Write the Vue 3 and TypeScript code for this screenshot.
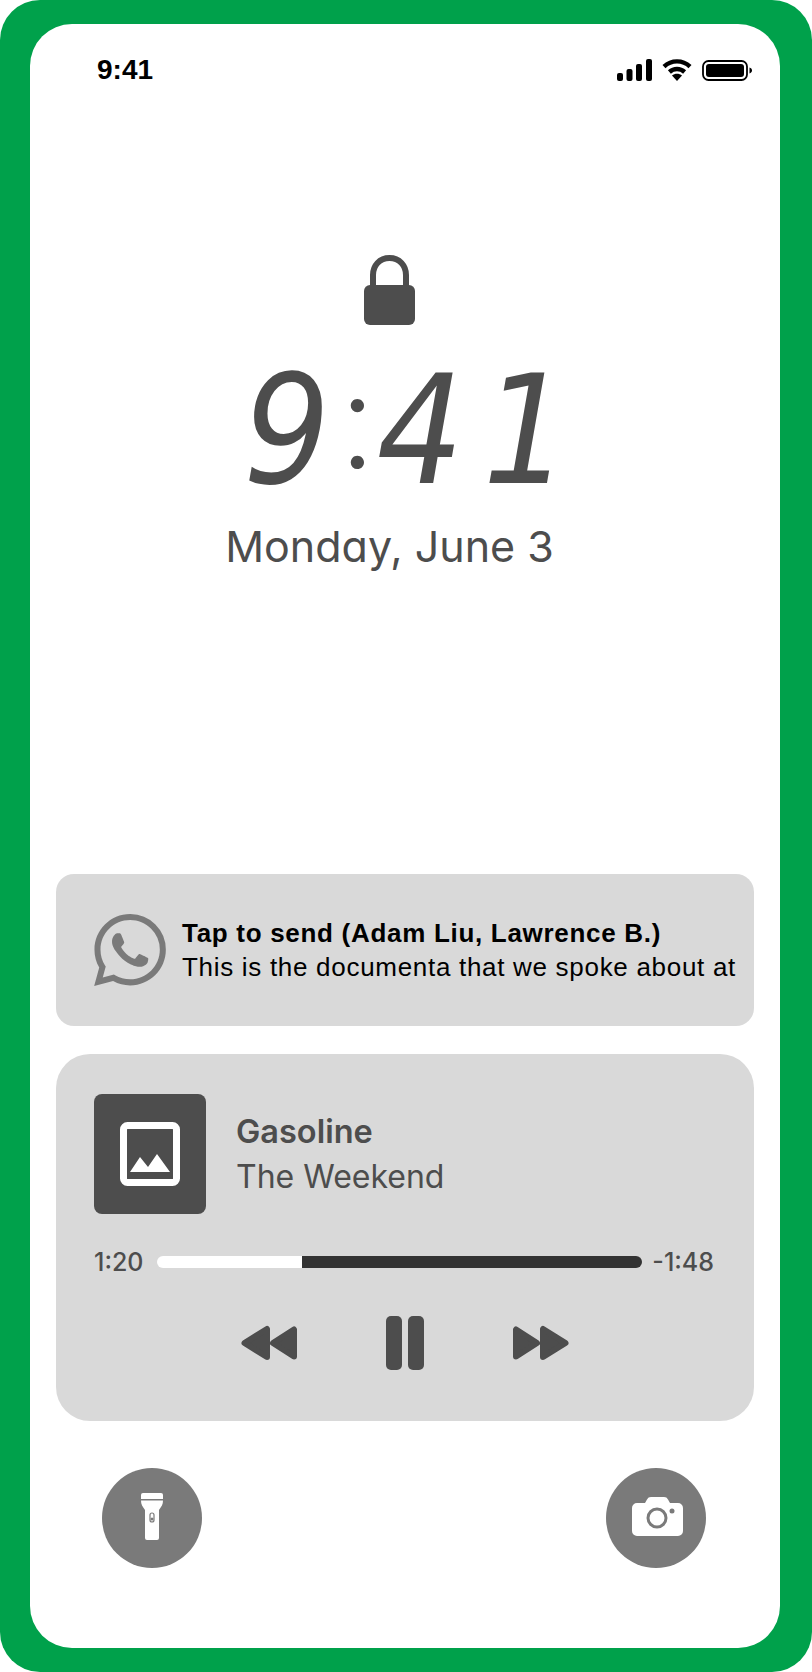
<template>
  <div class="frame">
    <div class="phone">
      <header class="status-bar">
        <span class="status-time">9:41</span>
        <div class="status-icons">
          <svg width="35" height="22" viewBox="0 0 35 22" fill="#000">
            <rect x="0" y="14" width="6" height="8" rx="2" />
            <rect x="9.5" y="10" width="6" height="12" rx="2" />
            <rect x="19" y="5" width="6" height="17" rx="2" />
            <rect x="29" y="0" width="6" height="22" rx="2" />
          </svg>
          <svg width="30" height="23" viewBox="0 0 30 23" fill="none" stroke="#000" stroke-width="4.4">
            <path d="M2 8.6C9.4 1.6 20.6 1.6 28 8.6" />
            <path d="M7.4 14C11.8 10 18.2 10 22.6 14" />
            <path d="M15 23l-5-5.4c2.8-2.4 7.2-2.4 10 0z" fill="#000" stroke="none" />
          </svg>
          <svg width="50" height="21" viewBox="0 0 50 21">
            <rect x="1" y="1" width="44" height="19" rx="5.5" fill="none" stroke="#000" stroke-width="1.8" />
            <rect x="4" y="4" width="38" height="13" rx="3" fill="#000" />
            <path d="M47.5 7.5c1.5.4 2.5 1.6 2.5 3s-1 2.6-2.5 3z" fill="#000" />
          </svg>
        </div>
      </header>

      <section class="hero">
        <svg class="lock" width="51" height="70" viewBox="0 0 51 70">
          <path d="M9 34V20C9 10.500 15.500 3 25.500 3S42 10.500 42 20v14" fill="none" stroke="#4d4d4d" stroke-width="6" />
          <rect x="0" y="30" width="51" height="40" rx="6" fill="#4d4d4d" />
        </svg>
        <div class="clock"><span>9</span><span class="colon">:</span><span>4</span><span class="last">1</span></div>
        <div class="date">Monday, June 3</div>
      </section>

      <section class="cards">
        <div class="notification">
          <svg class="wa" width="72" height="72" viewBox="0 0 24 24" fill="#7a7a7a">
            <path d="M17.472 14.382c-.297-.149-1.758-.867-2.03-.967-.273-.099-.471-.148-.67.15-.197.297-.767.966-.94 1.164-.173.199-.347.223-.644.075-.297-.15-1.255-.463-2.39-1.475-.883-.788-1.48-1.761-1.653-2.059-.173-.297-.018-.458.13-.606.134-.133.298-.347.446-.52.149-.174.198-.298.298-.497.099-.198.05-.371-.025-.52-.075-.149-.669-1.612-.916-2.207-.242-.579-.487-.5-.669-.51-.173-.008-.371-.01-.57-.01-.198 0-.52.074-.792.372-.272.297-1.04 1.016-1.04 2.479 0 1.462 1.065 2.875 1.213 3.074.149.198 2.096 3.2 5.077 4.487.709.306 1.262.489 1.694.625.712.227 1.36.195 1.871.118.571-.085 1.758-.719 2.006-1.413.248-.694.248-1.289.173-1.413-.074-.124-.272-.198-.57-.347m-5.421 7.403h-.004a9.87 9.87 0 01-5.031-1.378l-.361-.214-3.741.982.998-3.648-.235-.374a9.86 9.86 0 01-1.51-5.26c.001-5.45 4.436-9.884 9.888-9.884 2.64 0 5.122 1.03 6.988 2.898a9.825 9.825 0 012.893 6.994c-.003 5.45-4.437 9.884-9.885 9.884m8.413-18.297A11.815 11.815 0 0012.05 0C5.495 0 .16 5.335.157 11.892c0 2.096.547 4.142 1.588 5.945L.057 24l6.305-1.654a11.882 11.882 0 005.683 1.448h.005c6.554 0 11.89-5.335 11.893-11.893a11.821 11.821 0 00-3.48-8.413z" />
          </svg>
          <div class="note-text">
            <div class="note-title">Tap to send (Adam Liu, Lawrence B.)</div>
            <div class="note-body">This is the documenta that we spoke about at</div>
          </div>
        </div>

        <div class="player">
          <div class="track">
            <div class="artwork">
              <svg width="60" height="64" viewBox="0 0 60 64">
                <rect x="3.500" y="3.500" width="53" height="57" rx="4" fill="none" stroke="#fff" stroke-width="7" />
                <path d="M10 50l10-15 8 10 9-13 13 18z" fill="#fff" />
              </svg>
            </div>
            <div class="track-text">
              <div class="track-name">Gasoline</div>
              <div class="track-artist">The Weekend</div>
            </div>
          </div>
          <div class="progress-row">
            <span class="time-label">1:20</span>
            <div class="progress">
              <div class="progress-fill" :style="{ width: progress + '%' }"></div>
              <div class="progress-rest"></div>
            </div>
            <span class="time-label">-1:48</span>
          </div>
          <div class="controls">
            <svg width="56" height="36" viewBox="0 0 56 36" fill="#4d4d4d" stroke="#4d4d4d" stroke-width="6" stroke-linejoin="round">
              <path d="M3.500 18L26 4v28z" />
              <path d="M32 18L53 4.500v27z" />
            </svg>
            <div class="pause"><span></span><span></span></div>
            <svg width="56" height="36" viewBox="0 0 56 36" fill="#4d4d4d" stroke="#4d4d4d" stroke-width="6" stroke-linejoin="round">
              <path d="M24 18L3 4.500v27z" />
              <path d="M52.500 18L30 4v28z" />
            </svg>
          </div>
        </div>
      </section>

      <footer class="quick-actions">
        <button class="round-btn">
          <svg width="22" height="47" viewBox="0 0 22 47" fill="#fff">
            <path d="M2 0h18a2 2 0 0 1 2 2v4H0V2a2 2 0 0 1 2-2z" />
            <path d="M0 7.500h22c0 4-1.500 6-4 9.500v28a2 2 0 0 1-2 2H6a2 2 0 0 1-2-2V17C1.500 13.500 0 11.500 0 7.500z" />
            <rect x="9" y="20" width="4" height="9" rx="2" fill="none" stroke="#7a7a7a" stroke-width="1.200" />
            <circle cx="11" cy="26" r="1.500" fill="#7a7a7a" />
          </svg>
        </button>
        <button class="round-btn">
          <svg class="camera" width="51" height="39" viewBox="0 0 51 39">
            <path d="M5 6h8l2-3.500C16 .8 17 0 19 0h13c2 0 3 .8 4 2.500L38 6h8a5 5 0 0 1 5 5v23a5 5 0 0 1-5 5H5a5 5 0 0 1-5-5V11a5 5 0 0 1 5-5z" fill="#fff" />
            <circle cx="25" cy="21" r="9" fill="none" stroke="#7a7a7a" stroke-width="3" />
            <circle cx="40" cy="14" r="2.500" fill="#7a7a7a" />
          </svg>
        </button>
      </footer>
    </div>
  </div>
</template>

<script setup lang="ts">
import { ref } from 'vue';

const progress = ref(30);
</script>

<style scoped>
.frame {
  width: 812px;
  height: 1672px;
  box-sizing: border-box;
  padding: 24px 32px 24px 30px;
  background: #00a14b;
  border-radius: 40px;
}
.phone {
  height: 100%;
  background: #fff;
  border-radius: 42px;
  display: flex;
  flex-direction: column;
}

.status-bar {
  display: flex;
  align-items: center;
  justify-content: space-between;
  padding: 27px 28px 0 67px;
}
.status-time {
  font: 700 28px/34px "Liberation Sans", Arial, sans-serif;
  padding-top: 2px;
  color: #000;
}
.status-icons { display: flex; align-items: flex-end; gap: 10px; }

.hero {
  display: flex;
  flex-direction: column;
  align-items: center;
  padding-right: 31px;
  margin-top: 168px;
  color: #4d4d4d;
}
.lock { display: block; }
.clock {
  font: italic 400 152px/150px "DejaVu Sans", sans-serif;
  font-stretch: condensed;
  margin-left: 34px;
  margin-top: 28px;
  display: flex;
  align-items: baseline;
}
.clock .colon {
  font-family: Lato, sans-serif;
  font-style: normal;
  font-weight: 300;
  font-size: 143px;
  margin: 0 2px 0 10px;
  position: relative;
  top: -15px;
}
.clock .last { margin-left: 19px; }
.date {
  font: 400 43px/56px Inter, sans-serif;
  font-feature-settings: "cv11";
  margin-top: 12px;
}

.cards {
  margin-top: auto;
  padding: 0 26px;
  display: flex;
  flex-direction: column;
  gap: 28px;
}
.notification {
  height: 152px;
  background: #d9d9d9;
  border-radius: 18px;
  display: flex;
  align-items: center;
  padding-left: 38px;
  gap: 16px;
}
.wa { flex-shrink: 0; }
.note-text { font-family: "Liberation Sans", Arial, sans-serif; font-size: 26px; line-height: 34px; letter-spacing: 0.7px; color: #000; white-space: nowrap; }
.note-title { font-weight: 700; }

.player {
  height: 367px;
  box-sizing: border-box;
  background: #d9d9d9;
  border-radius: 34px;
  padding: 40px 38px 0;
  color: #4d4d4d;
}
.track { display: flex; align-items: center; gap: 30px; }
.artwork {
  width: 112px;
  height: 120px;
  background: #4d4d4d;
  border-radius: 8px;
  display: flex;
  align-items: center;
  justify-content: center;
}
.track-text { font-family: Inter, sans-serif; padding-top: 2px; }
.track-name { font-size: 32.5px; line-height: 40px; font-weight: 600; }
.track-artist { font-size: 32px; line-height: 44px; margin-top: 3px; }

.progress-row {
  display: flex;
  align-items: center;
  gap: 13px;
  margin-top: 33px;
  padding-right: 2px;
  font: 500 25px/30px Inter, sans-serif;
}
.time-label { color: #4d4d4d; }
.progress {
  flex: 1;
  height: 12px;
  margin-right: -3px;
  display: flex;
}
.progress-fill { background: #fff; border-radius: 6px 0 0 6px; }
.progress-rest { flex: 1; background: #333; border-radius: 0 6px 6px 0; }

.controls {
  display: flex;
  justify-content: center;
  align-items: center;
  gap: 89px;
  margin-top: 39px;
}
.pause { display: flex; gap: 6px; }
.pause span { width: 16px; height: 54px; background: #4d4d4d; border-radius: 5px; }

.quick-actions {
  display: flex;
  justify-content: space-between;
  padding: 47px 74px 80px 72px;
}
.round-btn {
  width: 100px;
  height: 100px;
  border: none;
  padding: 0 0 3px;
  border-radius: 50%;
  background: #7a7a7a;
  display: flex;
  align-items: center;
  justify-content: center;
}
.camera { margin-left: 3px; }
</style>

<style>
html, body { background: #fff; }
</style>
